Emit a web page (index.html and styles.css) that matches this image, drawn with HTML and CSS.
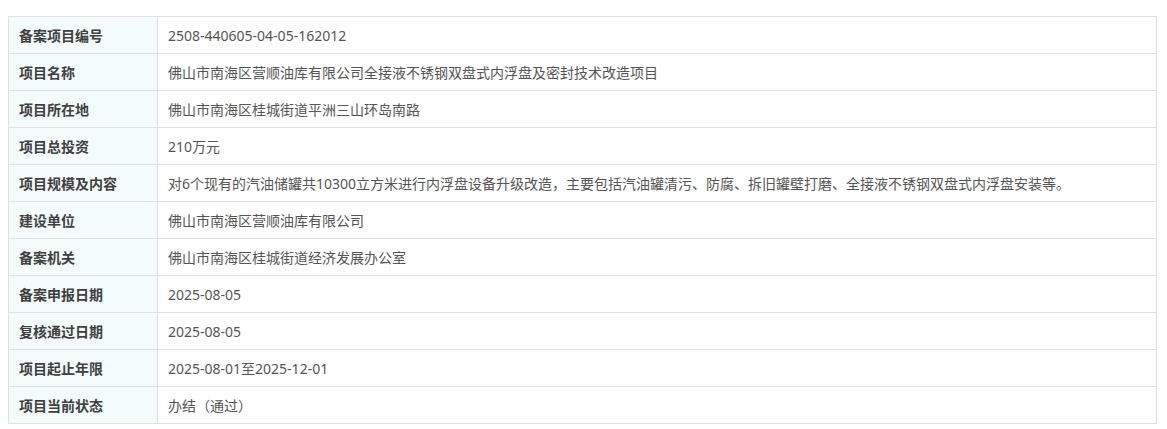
FILE: index.html
```html
<!DOCTYPE html>
<html lang="zh-CN">
<head>
    <meta charset="UTF-8">
    <meta name="viewport" content="width=device-width, initial-scale=1.0">
    <title>备案项目信息</title>
    <link rel="stylesheet" href="styles.css">
</head>
<body>

    <table class="info-table">
        <tr>
            <th>备案项目编号</th>
            <td>2508-440605-04-05-162012</td>
        </tr>
        <tr>
            <th>项目名称</th>
            <td>佛山市南海区营顺油库有限公司全接液不锈钢双盘式内浮盘及密封技术改造项目</td>
        </tr>
        <tr>
            <th>项目所在地</th>
            <td>佛山市南海区桂城街道平洲三山环岛南路</td>
        </tr>
        <tr>
            <th>项目总投资</th>
            <td>210万元</td>
        </tr>
        <tr>
            <th>项目规模及内容</th>
            <td>对6个现有的汽油储罐共10300立方米进行内浮盘设备升级改造，主要包括汽油罐清污、防腐、拆旧罐壁打磨、全接液不锈钢双盘式内浮盘安装等。</td>
        </tr>
        <tr>
            <th>建设单位</th>
            <td>佛山市南海区营顺油库有限公司</td>
        </tr>
        <tr>
            <th>备案机关</th>
            <td>佛山市南海区桂城街道经济发展办公室</td>
        </tr>
        <tr>
            <th>备案申报日期</th>
            <td>2025-08-05</td>
        </tr>
        <tr>
            <th>复核通过日期</th>
            <td>2025-08-05</td>
        </tr>
        <tr>
            <th>项目起止年限</th>
            <td>2025-08-01至2025-12-01</td>
        </tr>
        <tr>
            <th>项目当前状态</th>
            <td>办结（通过）</td>
        </tr>
    </table>

</body>
</html>
```

FILE: styles.css
```css
body {
    margin: 16px 8px 8px 8px;
    background: #fff;
    font-family: "Noto Sans", "Noto Sans CJK SC", sans-serif;
    font-size: 14px;
}

.info-table {
    width: 1149px;
    border-collapse: collapse;
    border: 1px solid #e0e0e0;
}

.info-table th,
.info-table td {
    height: 36px;
    padding: 0 10px;
    border: 1px solid #e0e0e0;
    text-align: left;
    vertical-align: middle;
}

.info-table th {
    width: 128px;
    background: #f3fbfb;
    color: #404040;
    font-weight: bold;
}

.info-table td {
    color: #555;
}
```
